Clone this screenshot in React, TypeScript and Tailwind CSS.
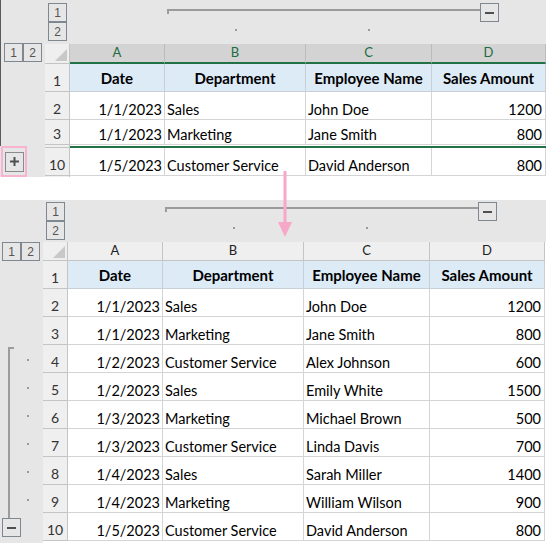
import React from "react";

type RowData = { n: number; date: string; dept: string; name: string; amt: string };

const rows: RowData[] = [
  { n: 2, date: "1/1/2023", dept: "Sales", name: "John Doe", amt: "1200" },
  { n: 3, date: "1/1/2023", dept: "Marketing", name: "Jane Smith", amt: "800" },
  { n: 4, date: "1/2/2023", dept: "Customer Service", name: "Alex Johnson", amt: "600" },
  { n: 5, date: "1/2/2023", dept: "Sales", name: "Emily White", amt: "1500" },
  { n: 6, date: "1/3/2023", dept: "Marketing", name: "Michael Brown", amt: "500" },
  { n: 7, date: "1/3/2023", dept: "Customer Service", name: "Linda Davis", amt: "700" },
  { n: 8, date: "1/4/2023", dept: "Sales", name: "Sarah Miller", amt: "1400" },
  { n: 9, date: "1/4/2023", dept: "Marketing", name: "William Wilson", amt: "900" },
  { n: 10, date: "1/5/2023", dept: "Customer Service", name: "David Anderson", amt: "800" },
];

function OutlineBox({ children }: { children: React.ReactNode }) {
  return (
    <div className="w-[19px] h-[19px] border border-[#7f8791] flex items-center justify-center text-[12px] leading-none text-[#555] font-['Liberation_Sans',sans-serif]">
      {children}
    </div>
  );
}

function MinusBox() {
  return (
    <div className="w-[19px] h-[19px] border border-[#7f8791] flex items-center justify-center">
      <div className="w-[9px] h-[2px] bg-[#4f4f4f]" />
    </div>
  );
}

function PlusIcon() {
  return (
    <svg width="9" height="9" viewBox="0 0 9 9">
      <rect x="0" y="3.5" width="9" height="2" fill="#4f4f4f" />
      <rect x="3.5" y="0" width="2" height="9" fill="#4f4f4f" />
    </svg>
  );
}

function Dot() {
  return <div className="w-[2px] h-[2px] bg-[#9a9a9a]" />;
}

function Triangle() {
  return (
    <svg width="12" height="12" viewBox="0 0 12 12">
      <polygon points="12,0 12,12 0,12" fill="#c8c8c8" />
    </svg>
  );
}

function OutlineBar({ top }: { top: boolean }) {
  return (
    <div className={top ? "h-[44px] flex bg-[#e6e6e6]" : "h-[42px] flex bg-[#e6e6e6]"}>
      <div className={top ? "w-[25px] flex flex-col items-center pt-[3px]" : "w-[25px] flex flex-col items-center pt-[2px]"}>
        <OutlineBox>1</OutlineBox>
        <OutlineBox>2</OutlineBox>
      </div>
      <div className="flex-1 flex flex-col">
        <div className="flex h-[25px]">
          <div className="w-[97px]" />
          <div
            className={
              top
                ? "w-[313px] h-[5px] mt-[9px] border-l-2 border-t-2 border-[#9b9b9b]"
                : "w-[313px] h-[5px] mt-[7px] border-l-2 border-t-2 border-[#9b9b9b]"
            }
          />
          <div className={top ? "mt-[3px]" : "mt-[2px]"}>
            <MinusBox />
          </div>
        </div>
        <div className={top ? "flex mt-[4px]" : "flex mt-[2px]"}>
          <div className="w-[95px]" />
          <div className="w-[141px] flex justify-center">
            <Dot />
          </div>
          <div className="w-[126px] flex justify-center">
            <Dot />
          </div>
        </div>
      </div>
    </div>
  );
}

function ColHeader({ top }: { top: boolean }) {
  const letters = ["A", "B", "C", "D"];
  const widths = top
    ? ["w-[95px]", "w-[141px]", "w-[126px]", "w-[114px]"]
    : ["w-[95px]", "w-[141px]", "w-[126px]", "w-[115px]"];
  return (
    <div className={top ? "flex h-[20px]" : "flex h-[19px]"}>
      <div className="w-[25px] bg-[#efefef] border-r border-b border-[#c4c4c4] flex items-end justify-end pr-[2px] pb-[2px]">
        <Triangle />
      </div>
      {letters.map((l, i) => (
        <div
          key={l}
          className={
            widths[i] +
            (top
              ? " bg-[#d3d3d3] text-[#1d6b40] border-r border-r-[#bcbcbc] border-b-2 border-b-[#217346]"
              : " bg-[#efefef] text-[#222] border-r border-b border-[#c4c4c4]") +
            " flex items-center justify-center text-[13px] font-['Lato',sans-serif]"
          }
        >
          {l}
        </div>
      ))}
    </div>
  );
}

function RowHeaderCell({ n }: { n: number }) {
  return (
    <div className="w-[25px] bg-[#efefef] border-r border-b border-[#c4c4c4] flex items-end justify-center pb-[1px] text-[14px] leading-[18px] text-[#333]">
      {n}
    </div>
  );
}

function Cells({ r, top }: { r: RowData; top: boolean }) {
  const cell = "border-r border-b border-[#d4d4d4] flex items-end pb-0 text-[14.5px] leading-[18px] text-black whitespace-nowrap overflow-hidden";
  return (
    <>
      <div className={"w-[95px] justify-end pr-[2px] " + cell}>{r.date}</div>
      <div className={"w-[141px] justify-start pl-[2px] " + cell}>{r.dept}</div>
      <div className={"w-[126px] justify-start pl-[2px] " + cell}>{r.name}</div>
      <div className={(top ? "w-[114px] " : "w-[115px] ") + "justify-end pr-[3px] " + cell}>{r.amt}</div>
    </>
  );
}

function HeaderRow({ top }: { top: boolean }) {
  const cell = "bg-[#ddebf7] border-r border-b border-[#c8cfd6] flex items-end justify-center pb-[4px] text-[15px] leading-[18px] font-bold text-black whitespace-nowrap";
  return (
    <div className="flex h-[28px]">
      <RowHeaderCell n={1} />
      <div className={"w-[95px] " + cell}>Date</div>
      <div className={"w-[141px] " + cell}>Department</div>
      <div className={"w-[126px] " + cell}>Employee Name</div>
      <div className={(top ? "w-[114px] " : "w-[115px] ") + cell}>Sales Amount</div>
    </div>
  );
}

function TopPanel() {
  return (
    <div className="flex h-[177px] bg-white">
      <div className="w-[45px] flex flex-col bg-[#e6e6e6]">
        <div className="flex-1 border-l border-[#5a5a5a] flex flex-col">
          <div className="h-[43px]" />
          <div className="flex pl-[3px]">
            <OutlineBox>1</OutlineBox>
            <OutlineBox>2</OutlineBox>
          </div>
        </div>
        <div className="h-[31px] w-[26px] ml-[1px] border-2 border-[#f7b3cf] flex items-center justify-center">
          <div className="w-[19px] h-[20px] border border-[#8a8a8a] flex items-center justify-center">
            <PlusIcon />
          </div>
        </div>
      </div>
      <div className="flex-1 flex flex-col">
        <OutlineBar top />
        <ColHeader top />
        <HeaderRow top />
        <div className="flex h-[28px]">
          <RowHeaderCell n={2} />
          <Cells r={rows[0]} top />
        </div>
        <div className="flex h-[25px]">
          <RowHeaderCell n={3} />
          <Cells r={rows[1]} top />
        </div>
        <div className="flex h-[3px]">
          <div className="w-[25px] bg-[#efefef] border-r border-b border-[#c4c4c4]" />
          <div className="flex-1 bg-white flex flex-col justify-end">
            <div className="h-[2px] bg-[#217346]" />
          </div>
        </div>
        <div className="flex h-[28px]">
          <RowHeaderCell n={10} />
          <Cells r={rows[8]} top />
        </div>
        <div className="flex h-[1px]">
          <div className="w-[25px] bg-[#efefef] border-r border-[#c4c4c4]" />
        </div>
      </div>
    </div>
  );
}

function BottomPanel() {
  return (
    <div className="flex h-[343px] bg-white">
      <div className="w-[43px] flex flex-col bg-[#e6e6e6]">
        <div className="h-[42px]" />
        <div className="flex pl-[2px]">
          <OutlineBox>1</OutlineBox>
          <OutlineBox>2</OutlineBox>
        </div>
        <div className="h-[84px]" />
        <div className="flex h-[196px]">
          <div className="w-[24px] flex flex-col pl-[2px]">
            <div className="ml-[6px] mt-[2px] h-[171px] w-[6px] border-l-2 border-t-2 border-[#9c9c9c]" />
            <MinusBox />
          </div>
          <div className="flex flex-col">
            {[4, 5, 6, 7, 8, 9].map((k) => (
              <div key={k} className="h-[28px] pl-[3px] pt-[14px]">
                <Dot />
              </div>
            ))}
          </div>
        </div>
      </div>
      <div className="flex-1 flex flex-col">
        <OutlineBar top={false} />
        <ColHeader top={false} />
        <HeaderRow top={false} />
        {rows.map((r) => (
          <div key={r.n} className="flex h-[28px]">
            <RowHeaderCell n={r.n} />
            <Cells r={r} top={false} />
          </div>
        ))}
      </div>
    </div>
  );
}

export default function App() {
  return (
    <div className="relative w-[546px] h-[543px] bg-white overflow-hidden font-['Lato',sans-serif]">
      <TopPanel />
      <div className="h-[23px]" />
      <BottomPanel />
      <svg className="absolute left-[278px] top-[171px]" width="14" height="67" viewBox="0 0 14 67">
        <rect x="5.5" y="0" width="3" height="53" fill="#f7a8c8" />
        <polygon points="0,51 14,51 7,66" fill="#f7a8c8" />
      </svg>
    </div>
  );
}
